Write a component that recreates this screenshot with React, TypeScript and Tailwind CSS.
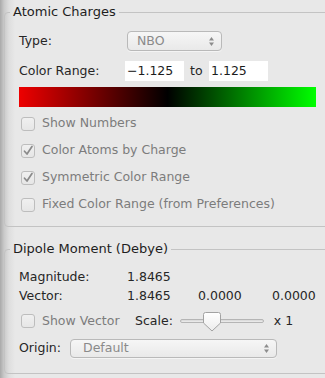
import React from "react";

const Arrows = () => (
    <svg width="7" height="11" viewBox="0 0 7 11" className="shrink-0">
        <path d="M3.5 1 L6 4.5 H1 Z" fill="#8c8c8c" />
        <path d="M3.5 10 L6 6.5 H1 Z" fill="#8c8c8c" />
    </svg>
)

const Select = ({ value, className }: { value: string, className: string }) => (
    <div className={`flex items-center justify-between rounded-[4px] border border-[#b9b9b9] bg-[linear-gradient(#f6f6f6,#e9e9e9)] pl-[9px] pr-[6px] text-[#8a8a8a] shadow-[0_1px_0_#f4f4f4] ${className}`}>
        <span>{value}</span>
        <Arrows />
    </div>
)

const Checkbox = ({ checked, label }: { checked?: boolean, label: string }) => (
    <div className="flex items-center gap-[7px]">
        <div className="flex h-[14px] w-[14px] items-center justify-center rounded-[3px] border border-[#bdbdbd] bg-[linear-gradient(#f0f0f0,#e6e6e6)]">
            {checked && (
                <svg width="12" height="12" viewBox="0 0 12 12">
                    <path d="M2.5 6.2 L5 9 L10 1.5" fill="none" stroke="#8a8a8a" strokeWidth="1.7" strokeLinecap="round" strokeLinejoin="round" />
                </svg>
            )}
        </div>
        <span className="text-[#7c7c7c]">{label}</span>
    </div>
)

const SliderThumb = () => (
    <svg width="18" height="20" viewBox="0 0 18 20">
        <defs>
            <linearGradient id="thumb" x1="0" y1="0" x2="0" y2="1">
                <stop offset="0" stopColor="#ffffff" />
                <stop offset="1" stopColor="#ececec" />
            </linearGradient>
        </defs>
        <path d="M2.5 0.5 H15.5 Q17.5 0.5 17.5 2.5 V11 L9 19 L0.5 11 V2.5 Q0.5 0.5 2.5 0.5 Z" fill="url(#thumb)" stroke="#a2a2a2" />
    </svg>
)

export default function App() {
    return (
        <div className="h-[378px] w-[325px] overflow-hidden bg-[linear-gradient(to_right,#a9a9a9_0px,#c9c9c9_4px,#dedede_9px,#e8e8e8_15px)] pl-[4px] font-['DejaVu_Sans',sans-serif] text-[12.5px] leading-none text-[#262626]">
            <fieldset className="mt-[4px] w-[340px] rounded-[4px] border border-[#c3c3c3] pb-[8px] pl-[14px]">
                <legend className="ml-[-9px] px-[3px] text-[13px] leading-[16px] text-[#1e1e1e]">Atomic Charges</legend>
                <div className="mt-[11px] flex h-[20px] items-center">
                    <span className="w-[108px]">Type:</span>
                    <Select value="NBO" className="h-[20px] w-[95px]" />
                </div>
                <div className="mt-[10px] flex h-[20px] items-center">
                    <span className="w-[106px]">Color Range:</span>
                    <div className="flex h-[20px] w-[59px] items-center bg-white pl-[2px] text-[#1c1c1c]">−1.125</div>
                    <span className="ml-[6px] w-[19px]">to</span>
                    <div className="flex h-[20px] w-[59px] items-center bg-white pl-[2px] text-[#1c1c1c]">1.125</div>
                </div>
                <div className="mt-[6px] h-[20px] w-[297px] bg-[linear-gradient(to_right,#ee0000,#000000_50%,#00ff00)]" />
                <div className="mt-[3px] flex flex-col pl-[2px]">
                    <div className="flex h-[27px] items-center"><Checkbox label="Show Numbers" /></div>
                    <div className="flex h-[27px] items-center"><Checkbox checked label="Color Atoms by Charge" /></div>
                    <div className="flex h-[27px] items-center"><Checkbox checked label="Symmetric Color Range" /></div>
                    <div className="flex h-[27px] items-center"><Checkbox label="Fixed Color Range (from Preferences)" /></div>
                </div>
            </fieldset>
            <fieldset className="mt-[14px] w-[340px] rounded-[4px] border border-[#c3c3c3] pb-[15px] pl-[14px]">
                <legend className="ml-[-9px] px-[3px] text-[13px] leading-[16px] text-[#1e1e1e]">Dipole Moment (Debye)</legend>
                <div className="mt-[11px] flex h-[19px] items-center">
                    <span className="w-[108px]">Magnitude:</span>
                    <span>1.8465</span>
                </div>
                <div className="flex h-[19px] items-center">
                    <span className="w-[108px]">Vector:</span>
                    <span className="w-[71px]">1.8465</span>
                    <span className="w-[74px]">0.0000</span>
                    <span>0.0000</span>
                </div>
                <div className="mt-[3px] flex h-[24px] items-center pl-[2px]">
                    <div className="w-[114px]"><Checkbox label="Show Vector" /></div>
                    <span>Scale:</span>
                    <div className="relative ml-[7px] flex h-[24px] w-[84px] items-center">
                        <div className="h-[4px] w-full rounded-full border border-[#b5b5b5] bg-[linear-gradient(#d6d6d6,#eeeeee)]" />
                        <div className="absolute left-[23px] top-[3px]"><SliderThumb /></div>
                    </div>
                    <span className="ml-[10px]">x 1</span>
                </div>
                <div className="mt-[6px] flex h-[19px] items-center">
                    <span className="w-[51px]">Origin:</span>
                    <Select value="Default" className="h-[19px] w-[207px] pl-[12px]" />
                </div>
            </fieldset>
        </div>
    )
}
